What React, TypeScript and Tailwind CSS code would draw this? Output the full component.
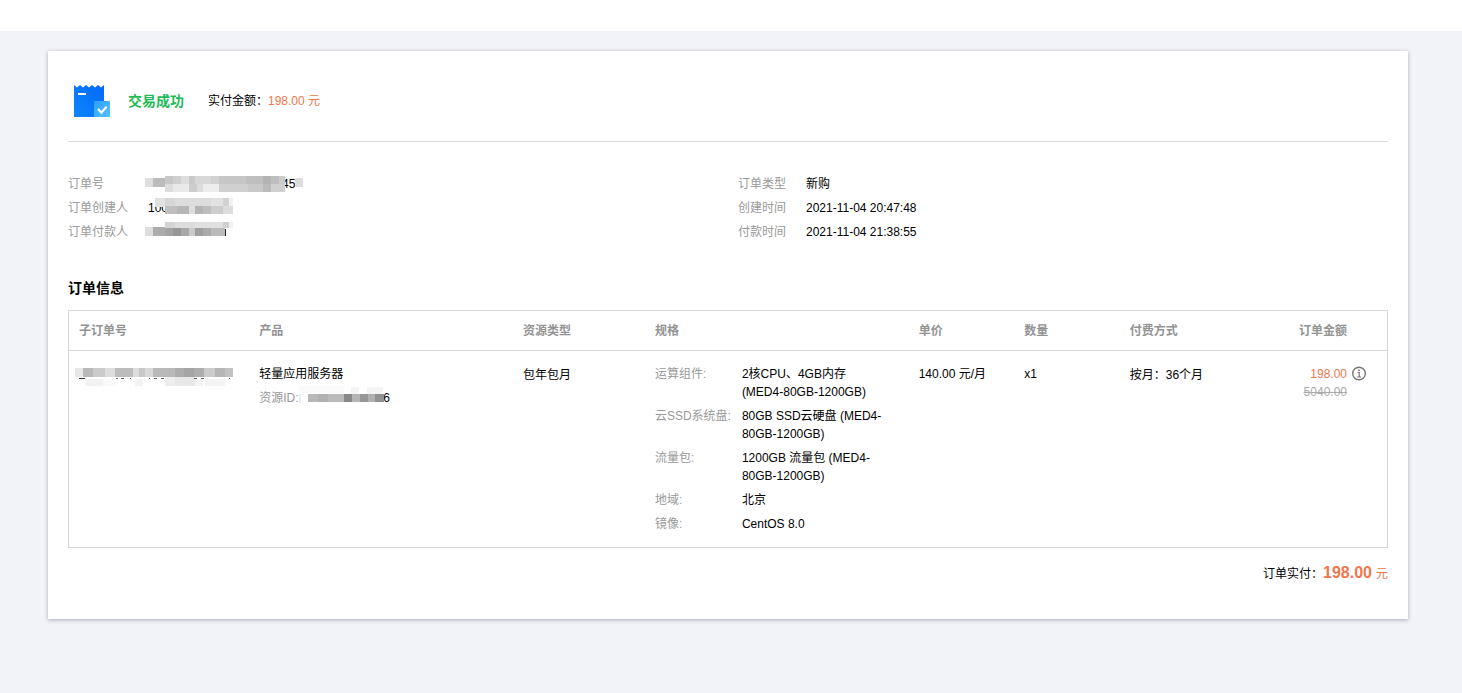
import type { ReactNode } from "react";

// x, y, width, height, grey value
type Cell = [number, number, number, number, string];

const ORDER_NO_MASK: Cell[] = [
  [1, 6, 8, 9, "#dedede"],
  [9, 6, 12, 9, "#bcbcbc"],
  [21, 4, 8, 8, "#c8c8c8"],
  [29, 4, 8, 8, "#cfcfcf"],
  [37, 4, 8, 8, "#dedede"],
  [45, 4, 6, 8, "#c9c9c9"],
  [51, 4, 16, 8, "#d8d8d8"],
  [67, 4, 8, 8, "#d2d2d2"],
  [75, 4, 27, 8, "#c6c6c6"],
  [102, 4, 17, 8, "#bfbfbf"],
  [119, 4, 8, 8, "#b4b4b4"],
  [127, 4, 8, 8, "#bebebe"],
  [135, 4, 6, 8, "#cccccc"],
  [21, 12, 8, 8, "#dddddd"],
  [29, 12, 16, 8, "#e9e9e9"],
  [45, 12, 8, 8, "#cccccc"],
  [53, 12, 6, 8, "#dcdcdc"],
  [59, 12, 16, 8, "#ededed"],
  [75, 12, 29, 8, "#d0d0d0"],
  [104, 12, 15, 8, "#c9c9c9"],
  [119, 12, 8, 8, "#bbbbbb"],
  [127, 12, 14, 8, "#d0d0d0"],
  [151, 6, 8, 9, "#dddddd"],
];

const CREATOR_MASK: Cell[] = [
  [11, 2, 10, 9, "#e2e2e2"],
  [21, 2, 10, 8, "#d6d6d6"],
  [31, 2, 36, 8, "#dddddd"],
  [67, 2, 12, 8, "#e2e2e2"],
  [79, 2, 6, 8, "#d2d2d2"],
  [85, 2, 4, 8, "#f2f2f2"],
  [21, 10, 12, 8, "#bfbfbf"],
  [33, 10, 12, 8, "#b7b7b7"],
  [45, 10, 6, 8, "#dedede"],
  [51, 10, 8, 8, "#b4b4b4"],
  [59, 10, 8, 8, "#bdbdbd"],
  [67, 10, 12, 8, "#cdcdcd"],
  [79, 10, 10, 8, "#dddddd"],
];

const PAYER_MASK: Cell[] = [
  [21, 2, 10, 6, "#d4d4d4"],
  [31, 2, 20, 6, "#dddddd"],
  [51, 2, 28, 6, "#e0e0e0"],
  [79, 2, 6, 6, "#d0d0d0"],
  [85, 2, 4, 6, "#f2f2f2"],
  [1, 7, 8, 9, "#dddddd"],
  [9, 7, 12, 9, "#acacac"],
  [21, 8, 8, 8, "#a3a3a3"],
  [29, 8, 8, 8, "#969696"],
  [37, 8, 8, 8, "#a8a8a8"],
  [45, 8, 6, 8, "#cacaca"],
  [51, 8, 8, 8, "#9f9f9f"],
  [59, 8, 8, 8, "#aaaaaa"],
  [67, 8, 14, 8, "#bababa"],
  [81, 9, 1, 7, "#222222"],
];

const SUB_ORDER_MASK: Cell[] = [
  [0, 6, 8, 9, "#e8e8e8"],
  [8, 6, 10, 9, "#b9b9b9"],
  [18, 6, 12, 9, "#cbcbcb"],
  [30, 6, 10, 9, "#dddddd"],
  [40, 6, 18, 9, "#bcbcbc"],
  [58, 6, 6, 9, "#dddddd"],
  [64, 6, 6, 9, "#c8c8c8"],
  [70, 6, 8, 9, "#d8d8d8"],
  [78, 6, 22, 9, "#b9b9b9"],
  [100, 6, 9, 9, "#adadad"],
  [109, 6, 10, 9, "#a5a5a5"],
  [119, 6, 10, 9, "#adadad"],
  [129, 6, 11, 9, "#cbcbcb"],
  [140, 6, 10, 9, "#b6b6b6"],
  [150, 6, 8, 9, "#c2c2c2"],
  [10, 17, 18, 7, "#f2f2f2"],
  [28, 17, 12, 7, "#f9f9f9"],
  [60, 17, 8, 7, "#f3f3f3"],
  [90, 15, 10, 9, "#ededed"],
  [100, 15, 20, 9, "#e8e8e8"],
  [120, 17, 8, 7, "#f4f4f4"],
  [130, 17, 20, 7, "#f4f4f4"],
  [4, 16, 6, 1, "#333333"],
  [41, 16, 2, 1, "#777777"],
  [46, 16, 3, 1, "#666666"],
  [55, 16, 1, 1, "#666666"],
  [74, 16, 1, 1, "#666666"],
  [79, 16, 3, 1, "#666666"],
  [86, 16, 3, 1, "#666666"],
  [119, 16, 3, 1, "#666666"],
  [126, 16, 3, 1, "#666666"],
  [154, 16, 1, 1, "#666666"],
];

const RESOURCE_MASK: Cell[] = [
  [0, 0, 45, 7, "#fafafa"],
  [52, 1, 8, 7, "#f4f4f4"],
  [68, 1, 16, 7, "#f4f4f4"],
  [0, 8, 2, 9, "#ededed"],
  [9, 8, 10, 8, "#b9b9b9"],
  [19, 8, 10, 8, "#b1b1b1"],
  [29, 8, 16, 8, "#bababa"],
  [45, 8, 8, 8, "#888888"],
  [53, 8, 8, 8, "#b5b5b5"],
  [61, 8, 8, 8, "#969696"],
  [69, 8, 7, 8, "#b0b0b0"],
  [76, 8, 9, 8, "#929292"],
];

const COLUMNS = [
  { title: "子订单号", className: "w-[13.7%]" },
  { title: "产品", className: "w-[20%]" },
  { title: "资源类型", className: "w-[10%]" },
  { title: "规格", className: "w-[20%]" },
  { title: "单价", className: "w-[8%]" },
  { title: "数量", className: "w-[8%]" },
  { title: "付费方式", className: "w-[8%]" },
];

const SPECS = [
  { label: "运算组件:", value: "2核CPU、4GB内存 (MED4-80GB-1200GB)" },
  { label: "云SSD系统盘:", value: "80GB SSD云硬盘 (MED4-80GB-1200GB)" },
  { label: "流量包:", value: "1200GB 流量包 (MED4-80GB-1200GB)" },
  { label: "地域:", value: "北京" },
  { label: "镜像:", value: "CentOS 8.0" },
];

function Mask({ cells, className }: { cells: Cell[]; className: string }) {
  return (
    <svg
      width="160"
      height="24"
      viewBox="0 0 160 24"
      shapeRendering="crispEdges"
      className={`absolute top-0 ${className}`}
      aria-hidden
    >
      {cells.map(([x, y, w, h, fill], i) => (
        <rect key={i} x={x} y={y} width={w} height={h} fill={fill} />
      ))}
    </svg>
  );
}

function ReceiptIcon() {
  return (
    <svg width="36" height="32" viewBox="0 0 36 32" className="shrink-0" aria-hidden>
      <defs>
        <linearGradient id="receipt" x1="0" y1="1" x2="1" y2="0">
          <stop offset="0" stopColor="#0c86fb" />
          <stop offset="1" stopColor="#0568fd" />
        </linearGradient>
        <linearGradient id="tick" x1="0" y1="0" x2="1" y2="1">
          <stop offset="0" stopColor="#2f9dff" />
          <stop offset="1" stopColor="#55c4ff" />
        </linearGradient>
      </defs>
      <path
        d="M0 0L3 2.6L6 0L9 2.6L12 0L15 2.6L18 0L21 2.6L24 0L27 2.6L30 0V32H0z"
        fill="url(#receipt)"
      />
      <path d="M4 8h8v2H4z" fill="#fff" />
      <path d="M20 16h16v16H20z" fill="url(#tick)" />
      <path d="M24 24l3.4 3.6 5.2-6" fill="none" stroke="#fff" strokeWidth="2.2" />
    </svg>
  );
}

function InfoIcon() {
  return (
    <svg width="16" height="16" viewBox="0 0 16 16" fill="none" stroke="#777" aria-hidden>
      <circle cx="8" cy="7.5" r="6.3" strokeWidth="1.4" />
      <path d="M6.4 6.5h1.8v4.4M6.2 11h3.8" strokeWidth="1.2" />
      <path d="M7.2 3.5h1.6V5H7.2z" fill="#777" stroke="none" />
    </svg>
  );
}

function Field({ label, labelClass, children }: { label: string; labelClass: string; children: ReactNode }) {
  return (
    <div className="flex">
      <dt className={`shrink-0 text-[#999] ${labelClass}`}>{label}</dt>
      <dd className="relative">{children}</dd>
    </div>
  );
}

export default function App() {
  return (
    <div className="min-h-screen bg-[#f2f3f8] font-['Liberation_Sans','Noto_Sans_CJK_SC',sans-serif] text-xs leading-6 text-black">
      <div className="h-[31px] bg-white" />
      <main className="mt-5 mr-[54px] ml-12 bg-white px-5 pb-[33px] shadow-[0_1px_4px_rgba(54,58,80,0.4)]">
        <header className="flex items-center border-b border-[#dcdcdf] pt-[34px] pb-6 pl-[6px]">
          <ReceiptIcon />
          <h1 className="ml-[18px] text-sm font-bold text-[#1fbb5a]">交易成功</h1>
          <p className="ml-6">
            实付金额：<span className="text-[#f0764b]">198.00 元</span>
          </p>
        </header>

        <section className="mt-[30px] grid grid-cols-2 gap-x-5">
          <dl>
            <Field label="订单号" labelClass="w-20">
              <span className="pl-[134px]">45</span>
              <Mask cells={ORDER_NO_MASK} className="-left-1" />
            </Field>
            <Field label="订单创建人" labelClass="w-20">
              <span>100</span>
              <Mask cells={CREATOR_MASK} className="-left-1" />
            </Field>
            <Field label="订单付款人" labelClass="w-20">
              <Mask cells={PAYER_MASK} className="-left-1" />
            </Field>
          </dl>
          <dl>
            <Field label="订单类型" labelClass="w-[68px]">新购</Field>
            <Field label="创建时间" labelClass="w-[68px]">2021-11-04 20:47:48</Field>
            <Field label="付款时间" labelClass="w-[68px]">2021-11-04 21:38:55</Field>
          </dl>
        </section>

        <h2 className="mt-8 mb-[10px] text-sm leading-6 font-bold">订单信息</h2>

        <table className="w-full table-fixed border-collapse border border-[#d5d7dd]">
          <thead>
            <tr className="h-10 border-b border-[#d5d7dd] text-left text-[#939393]">
              {COLUMNS.map((col) => (
                <th key={col.title} className={`px-[10px] font-bold ${col.className}`}>
                  {col.title}
                </th>
              ))}
              <th className="pr-10 text-right font-bold">订单金额</th>
            </tr>
          </thead>
          <tbody>
            <tr className="align-top">
              <td className="px-[10px] pt-[11px]">
                <div className="relative h-6">
                  <Mask cells={SUB_ORDER_MASK} className="-left-1" />
                </div>
              </td>
              <td className="px-[10px] pt-[11px]">
                <p>轻量应用服务器</p>
                <p className="flex">
                  <span className="w-10 text-[#999]">资源ID:</span>
                  <span className="relative pl-[84px]">
                    6
                    <Mask cells={RESOURCE_MASK} className="left-0" />
                  </span>
                </p>
              </td>
              <td className="px-[10px] pt-3">包年包月</td>
              <td className="px-[10px] py-[14px] leading-[18px]">
                <dl className="space-y-[6px]">
                  {SPECS.map((spec) => (
                    <div key={spec.label} className="flex">
                      <dt className="w-[87px] shrink-0 text-[#999]">{spec.label}</dt>
                      <dd className="max-w-[144px]">{spec.value}</dd>
                    </div>
                  ))}
                </dl>
              </td>
              <td className="px-[10px] pt-[11px]">140.00 元/月</td>
              <td className="px-[10px] pt-[11px]">x1</td>
              <td className="px-[10px] pt-3">按月：36个月</td>
              <td className="pt-[14px] pr-5 text-right leading-[18px]">
                <div className="flex items-center justify-end gap-1">
                  <span className="text-[#f0764b]">198.00</span>
                  <button type="button" aria-label="价格说明">
                    <InfoIcon />
                  </button>
                </div>
                <del className="mr-5 text-[#aaa]">5040.00</del>
              </td>
            </tr>
          </tbody>
        </table>

        <p className="mt-[13px] text-right">
          订单实付：
          <strong className="text-base leading-6 text-[#f0764b]">198.00</strong>
          <span className="ml-1 text-[#f0764b]">元</span>
        </p>
      </main>
    </div>
  );
}
